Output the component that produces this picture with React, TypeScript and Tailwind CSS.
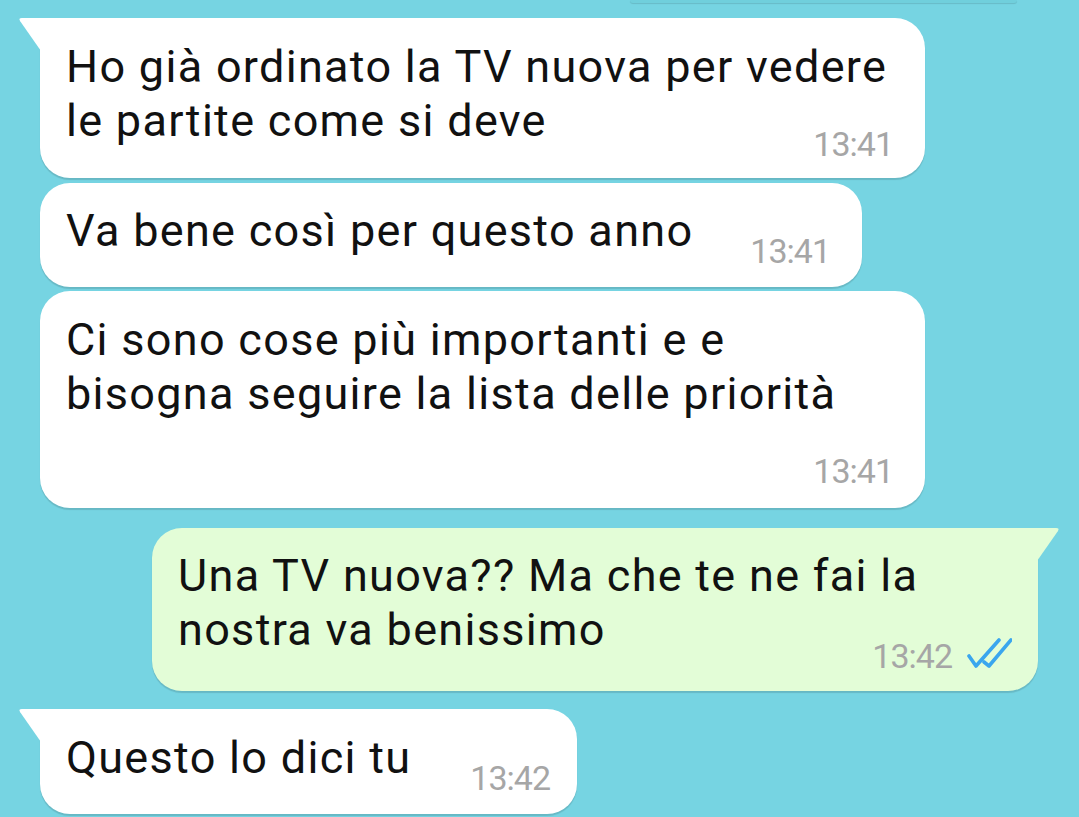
import React from "react";

const font = { fontFamily: "Roboto, 'Noto Sans', Arial, sans-serif" };

function TailLeft({ color }: { color: string }) {
  return (
    <svg
      className="absolute left-[-22px] top-0"
      width="23"
      height="33"
      viewBox="0 0 23 33"
    >
      <path d="M23 0 L4 0 Q0 0 2.2 3.2 L23 33 Z" fill={color} />
    </svg>
  );
}

function TailRight({ color }: { color: string }) {
  return (
    <svg
      className="absolute right-[-22px] top-0"
      width="23"
      height="33"
      viewBox="0 0 23 33"
    >
      <path d="M0 0 L19 0 Q23 0 20.8 3.2 L0 33 Z" fill={color} />
    </svg>
  );
}

function Ticks() {
  return (
    <svg width="46" height="32" viewBox="0 0 46 32" className="ml-[14px] mb-[2px]">
      <path
        d="M3 18 L10 28 L33 2"
        fill="none"
        stroke="#3aa6ee"
        strokeWidth="3.6"
        strokeLinecap="round"
        strokeLinejoin="round"
      />
      <path
        d="M18 24 L23 28 L45 2"
        fill="none"
        stroke="#3aa6ee"
        strokeWidth="3.6"
        strokeLinecap="round"
        strokeLinejoin="round"
      />
    </svg>
  );
}

const bubbleBase =
  "relative rounded-[30px] shadow-[0_2px_1px_rgba(0,0,0,0.13)]";
const textCls =
  "text-[45px] leading-[54px] tracking-[1.3px] text-[#111111] whitespace-pre";
const timeCls = "text-[34px] leading-[32px] tracking-[-1px] text-[#a6a6a6]";

export default function App() {
  return (
    <div
      className="w-[1079px] h-[817px] overflow-hidden bg-[#76d4e2] flex flex-col"
      style={font}
    >
      {/* previous bubble edge */}
      <div className="ml-[630px] w-[387px] h-[3px] rounded-b-[20px] bg-[#70cfdc] shadow-[0_1px_1px_rgba(0,0,0,0.12)]" />

      {/* Bubble 1 */}
      <div className={`${bubbleBase} bg-white rounded-tl-none ml-[40px] mt-[15px] w-[885px] pl-[26px] pr-[32px] pt-[22px] pb-[18px] flex flex-col`}>
        <TailLeft color="#ffffff" />
        <div className={textCls}>{"Ho già ordinato la TV nuova per vedere\nle partite come si deve"}</div>
        <div className={`${timeCls} self-end mt-[-20px]`}>13:41</div>
      </div>

      {/* Bubble 2 */}
      <div className={`${bubbleBase} bg-white ml-[40px] mt-[5px] w-[822px] pl-[26px] pr-[32px] pt-[21px] pb-[20px] flex flex-row justify-between items-start`}>
        <div className={textCls}>Va bene così per questo anno</div>
        <div className={`${timeCls} mt-[31px]`}>13:41</div>
      </div>

      {/* Bubble 3 */}
      <div className={`${bubbleBase} bg-white ml-[40px] mt-[4px] w-[885px] pl-[26px] pr-[32px] pt-[22px] pb-[21px] flex flex-col`}>
        <div className={textCls}>
          {"Ci sono cose più importanti e e\nbisogna seguire la lista delle priorità\n\u00a0"}
        </div>
        <div className={`${timeCls} self-end mt-[-20px]`}>13:41</div>
      </div>

      {/* Bubble 4 (sent) */}
      <div className={`${bubbleBase} bg-[#e3fdd7] rounded-tr-none ml-[152px] mt-[20px] w-[886px] pl-[26px] pr-[26px] pt-[21px] pb-[19px] flex flex-col`}>
        <TailRight color="#e3fdd7" />
        <div className={textCls}>{"Una TV nuova?? Ma che te ne fai la\nnostra va benissimo"}</div>
        <div className="self-end mt-[-19px] flex flex-row items-end">
          <div className={timeCls}>13:42</div>
          <Ticks />
        </div>
      </div>

      {/* Bubble 5 */}
      <div className={`${bubbleBase} bg-white rounded-tl-none ml-[40px] mt-[18px] w-[537px] pl-[26px] pr-[27px] pt-[22px] pb-[20px] flex flex-row justify-between items-start`}>
        <TailLeft color="#ffffff" />
        <div className={textCls}>Questo lo dici tu</div>
        <div className={`${timeCls} mt-[31px]`}>13:42</div>
      </div>
    </div>
  );
}
